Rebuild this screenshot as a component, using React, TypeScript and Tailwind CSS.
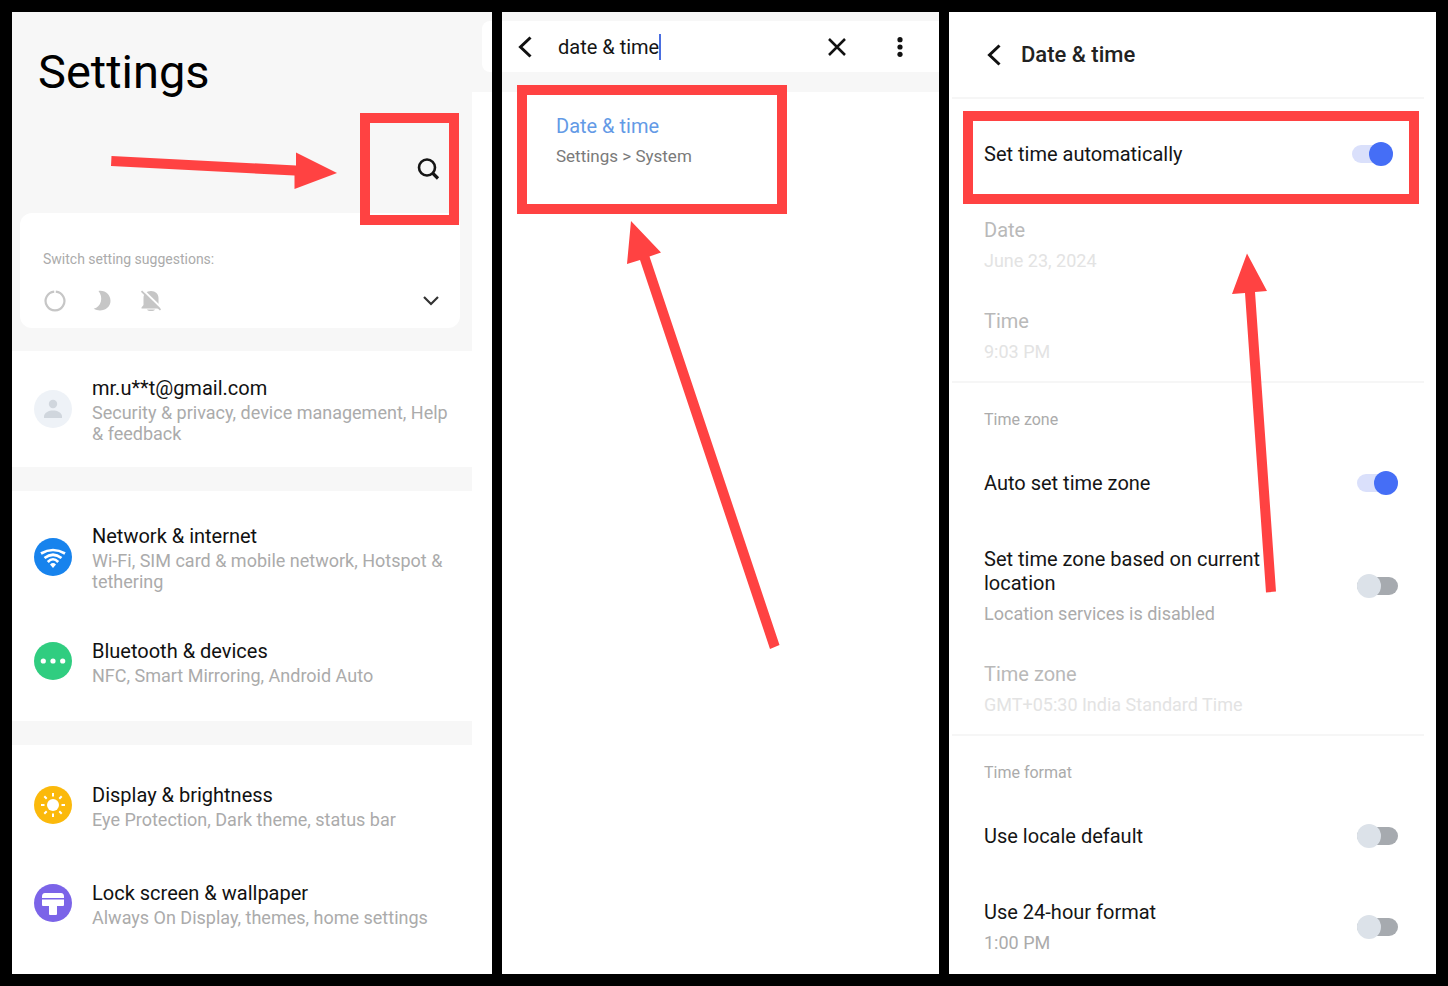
import { useState, type ReactNode } from "react";
import clsx from "clsx";

const ARROW = "#ff4242";

function SettingsItem({ icon, title, text }: { icon: ReactNode; title: string; text: string }) {
    return (
        <a href="#" className="flex items-center gap-5 min-h-[98px] py-5 pl-[22px] pr-6">
            {icon}
            <div>
                <p className="text-xl leading-7 text-[#111]">{title}</p>
                <p className="text-lg leading-[21px] text-[#ababab]">{text}</p>
            </div>
        </a>
    );
}

function IconCircle({ className, children }: { className: string; children: ReactNode }) {
    return (
        <span className={clsx("size-[38px] shrink-0 rounded-full", className)}>
            <svg viewBox="0 0 38 38" className="size-full" fill="none">{children}</svg>
        </span>
    );
}

function BackIcon() {
    return (
        <svg width="14" height="22" viewBox="0 0 14 22" fill="none" stroke="#111" strokeWidth="3">
            <path d="M12.5 1.5 2.5 11l10 9.5" />
        </svg>
    );
}

function SettingsPanel() {
    return (
        <section className="relative flex bg-white">
            <div className="flex-1">
                <header className="bg-[#f7f7f7] px-2 pb-[23px]">
                    <h1 className="pt-8 pl-[18px] text-[47px] leading-[56px] text-black">Settings</h1>
                    <div className="flex justify-end pt-[57px] pr-6 pb-8">
                        <button aria-label="Search" className="relative">
                            <svg width="24" height="24" viewBox="0 0 24 24" fill="none" stroke="#151515" strokeWidth="2.6">
                                <circle cx="11" cy="10.5" r="8" />
                                <path d="m16.5 16 5.5 5.500" strokeWidth="3.2" />
                            </svg>
                            <span className="absolute -left-14 -top-11 h-28 w-[99px] border-10 border-[#ff4242]" />
                        </button>
                    </div>
                    <div className="mr-1 rounded-xl bg-white pt-9 pb-[15px] pl-[23px] pr-[21px]">
                        <p className="text-sm leading-5 text-[#ababab]">Switch setting suggestions:</p>
                        <div className="mt-5 flex items-center gap-6">
                            <button aria-label="Data saver">
                                <svg width="24" height="24" viewBox="0 0 24 24" fill="none" stroke="#c6c6c6" strokeWidth="2.2">
                                    <path d="M12.8 2.6a9.4 9.4 0 1 1-1.600 0" />
                                </svg>
                            </button>
                            <button aria-label="Dark theme">
                                <svg width="24" height="24" viewBox="0 0 24 24" fill="#c6c6c6">
                                    <path d="M7.500 2C14.500 1 19.500 6 19.500 12c0 7.500-9 12-16.800 7.800C10.500 18 12.500 8 7.500 2z" />
                                </svg>
                            </button>
                            <button aria-label="Mute">
                                <svg width="24" height="24" viewBox="0 0 24 24">
                                    <path fill="#c6c6c6" d="M12 2c4.500 0 7.500 3 7.500 7v7l1.500 2.500v1H2.500v-1L4.500 16V9c0-4 3-7 7.500-7zM8 20.500h8c-1 2-7 2-8 0z" />
                                    <path stroke="#fff" strokeWidth="2" d="M4 1 23 19.500" />
                                    <path stroke="#c6c6c6" strokeWidth="1.800" d="M2.500 2.200 21.500 20.800" />
                                </svg>
                            </button>
                            <button aria-label="Show more" className="ml-auto">
                                <svg width="16" height="10" viewBox="0 0 16 10" fill="none" stroke="#333" strokeWidth="2.2">
                                    <path d="m1 1 7 7 7-7" />
                                </svg>
                            </button>
                        </div>
                    </div>
                </header>

                <div className="py-[3px]">
                    <SettingsItem
                        title="mr.u**t@gmail.com"
                        text="Security & privacy, device management, Help & feedback"
                        icon={
                            <IconCircle className="bg-[#eef2f7]">
                                <g fill="#d0d6dd">
                                    <circle cx="19" cy="14" r="4.200" />
                                    <path d="M10 28v-2c1-7.500 17-7.500 18 0v2z" />
                                </g>
                            </IconCircle>
                        }
                    />
                </div>
                <div className="h-6 bg-[#f7f7f7]" />
                <div className="py-[11px]">
                    <SettingsItem
                        title="Network & internet"
                        text="Wi-Fi, SIM card & mobile network, Hotspot & tethering"
                        icon={
                            <IconCircle className="bg-[#1783ed]">
                                <g stroke="#fff" strokeWidth="2.700">
                                    <path d="M7 15.500Q19 8.500 31 15.500" />
                                    <path d="M10.500 20Q19 13.500 27.500 20" />
                                    <path d="M13.800 24Q19 18.500 24.200 24" />
                                </g>
                                <path fill="#fff" d="M16 26.500Q19 23.700 22 26.500L19 30z" />
                            </IconCircle>
                        }
                    />
                    <SettingsItem
                        title="Bluetooth & devices"
                        text="NFC, Smart Mirroring, Android Auto"
                        icon={
                            <IconCircle className="bg-[#30cd80]">
                                <g fill="#fff">
                                    <circle cx="9.300" cy="19" r="2.600" />
                                    <circle cx="19" cy="19" r="2.600" />
                                    <circle cx="28.700" cy="19" r="2.600" />
                                </g>
                            </IconCircle>
                        }
                    />
                </div>
                <div className="h-6 bg-[#f7f7f7]" />
                <div className="py-[11px]">
                    <SettingsItem
                        title="Display & brightness"
                        text="Eye Protection, Dark theme, status bar"
                        icon={
                            <IconCircle className="bg-[#fbb90b]">
                                <circle cx="19" cy="19" r="6" fill="#fff" />
                                <path
                                    stroke="#fff"
                                    strokeWidth="2"
                                    d="M19 7v3.500M19 27.500V31M7 19h3.500M27.500 19H31M10.300 10.300l2.400 2.400M25.300 25.300l2.400 2.400M10.300 27.700l2.400-2.400M25.300 12.700l2.400-2.400"
                                />
                            </IconCircle>
                        }
                    />
                    <SettingsItem
                        title="Lock screen & wallpaper"
                        text="Always On Display, themes, home settings"
                        icon={
                            <IconCircle className="bg-[#7b64e8]">
                                <path
                                    fill="#fff"
                                    d="M8 14v-1.500Q8 9 11 9h16q3 0 3 3.500V14zM8 15.500h22V21q0 1-1 1h-6v8q0 1-1 1h-6q-1 0-1-1v-8H9q-1 0-1-1z"
                                />
                            </IconCircle>
                        }
                    />
                </div>
            </div>

            {/* edge of the next screen sliding in */}
            <div className="w-5">
                <div className="flex h-20 justify-end bg-[#f7f7f7] pt-[9px]">
                    <div className="h-[51px] w-2.5 rounded-l-lg bg-white" />
                </div>
            </div>

            <svg className="pointer-events-none absolute left-[99px] top-[140px]" width="228" height="38" viewBox="0 0 228 38" fill={ARROW}>
                <path d="M.5 4 185 13.500V.5L226 21 183.500 37V23.500L0 14z" />
            </svg>
        </section>
    );
}

function SearchPanel() {
    const [query, setQuery] = useState("date & time");
    return (
        <section className="relative bg-white">
            <div className="bg-[#f7f7f7] pt-[9px] pb-5">
                <div className="flex h-[51px] items-center bg-white pl-4 pr-9">
                    <button aria-label="Back"><BackIcon /></button>
                    <div className="ml-[26px] flex flex-1 items-center">
                        <input
                            aria-label="Search settings"
                            value={query}
                            onChange={(e) => setQuery(e.target.value)}
                            className="[field-sizing:content] text-xl leading-6 text-[#151515] outline-none"
                        />
                        <span className="h-[26px] w-0.5 bg-[#4a6ee0]" />
                    </div>
                    <button aria-label="Clear">
                        <svg width="18" height="18" viewBox="0 0 18 18" stroke="#111" strokeWidth="2.500">
                            <path d="m1 1 16 16M17 1 1 17" />
                        </svg>
                    </button>
                    <button aria-label="More options" className="ml-[51px]">
                        <svg width="6" height="20" viewBox="0 0 6 20" fill="#111">
                            <circle cx="3" cy="2.700" r="2.600" />
                            <circle cx="3" cy="10" r="2.600" />
                            <circle cx="3" cy="17.300" r="2.600" />
                        </svg>
                    </button>
                </div>
            </div>
            <a href="#" className="relative block pt-[22px] pl-[54px]">
                <p className="text-xl leading-6 text-[#639ae6]">Date &amp; time</p>
                <p className="mt-2 text-[17px] leading-[21px] text-[#7a7a7a]">Settings &gt; System</p>
                <span className="absolute left-[15px] top-[-7px] h-[129px] w-[270px] border-10 border-[#ff4242]" />
            </a>
            <svg className="pointer-events-none absolute left-[124px] top-[208px]" width="156" height="430" viewBox="0 0 156 430" fill={ARROW}>
                <path d="M5 1 35 32.500 23.500 36.500 153.500 425 144 429 14 40 1 44z" />
            </svg>
        </section>
    );
}

function Row({ title, text, disabled, children }: { title: string; text?: string; disabled?: boolean; children?: ReactNode }) {
    return (
        <label className="flex min-h-[90px] items-center justify-between gap-6 py-[19px] pl-[35px] pr-[38px]">
            <span>
                <span className={clsx("block text-xl leading-6", disabled ? "text-[#b9b9b9]" : "text-[#151515]")}>{title}</span>
                {text && (
                    <span className={clsx("mt-2 block text-lg leading-[21px]", disabled ? "text-[#e3e3e3]" : "text-[#ababab]")}>{text}</span>
                )}
            </span>
            {children}
        </label>
    );
}

function Toggle({ on, className }: { on?: boolean; className?: string }) {
    return (
        <input
            type="checkbox"
            defaultChecked={on}
            className={clsx(
                "relative h-6 w-[41px] shrink-0 appearance-none",
                "before:absolute before:inset-x-0 before:top-[3px] before:h-[18px] before:rounded-full before:bg-[#a6aaaf] checked:before:bg-[#dae0fb]",
                "after:absolute after:left-0 after:top-0 after:size-6 after:rounded-full after:bg-[#dce2e9] checked:after:left-[17px] checked:after:bg-[#456ef6]",
                className
            )}
        />
    );
}

function Divider() {
    return <hr className="ml-[3px] mr-3 border-t-2 border-[#f6f6f6]" />;
}

function GroupLabel({ children }: { children: ReactNode }) {
    return <h3 className="pt-[25px] pb-[6px] pl-[35px] text-base leading-6 text-[#ababab]">{children}</h3>;
}

function DateTimePanel() {
    return (
        <section className="relative bg-white">
            <header className="flex h-[85px] items-center gap-5 pl-[38px]">
                <button aria-label="Back"><BackIcon /></button>
                <h2 className="text-[22px] font-medium leading-7 text-[#222]">Date &amp; time</h2>
            </header>
            <Divider />
            <div className="pt-[10px]">
                <div className="relative">
                    <Row title="Set time automatically"><Toggle on className="mr-[5px]" /></Row>
                    <span className="pointer-events-none absolute left-[14px] right-[17px] top-0.5 h-[93px] border-10 border-[#ff4242]" />
                </div>
                <Row title="Date" text="June 23, 2024" disabled />
                <Row title="Time" text="9:03 PM" disabled />
            </div>
            <Divider />
            <GroupLabel>Time zone</GroupLabel>
            <Row title="Auto set time zone"><Toggle on /></Row>
            <Row title="Set time zone based on current location" text="Location services is disabled"><Toggle /></Row>
            <Row title="Time zone" text="GMT+05:30 India Standard Time" disabled />
            <Divider />
            <GroupLabel>Time format</GroupLabel>
            <Row title="Use locale default"><Toggle /></Row>
            <Row title="Use 24-hour format" text="1:00 PM"><Toggle /></Row>

            <svg className="pointer-events-none absolute left-[283px] top-[241px]" width="45" height="340" viewBox="0 0 45 340" fill={ARROW}>
                <path d="M15 .5 35 38 23 39 44 338.500 34 339.500 13 40 0 41z" />
            </svg>
        </section>
    );
}

export default function App() {
    return (
        <main className="grid min-h-screen grid-cols-[480fr_437fr_487fr] gap-[10px] bg-black p-3 font-[Roboto,sans-serif]">
            <SettingsPanel />
            <SearchPanel />
            <DateTimePanel />
        </main>
    );
}
